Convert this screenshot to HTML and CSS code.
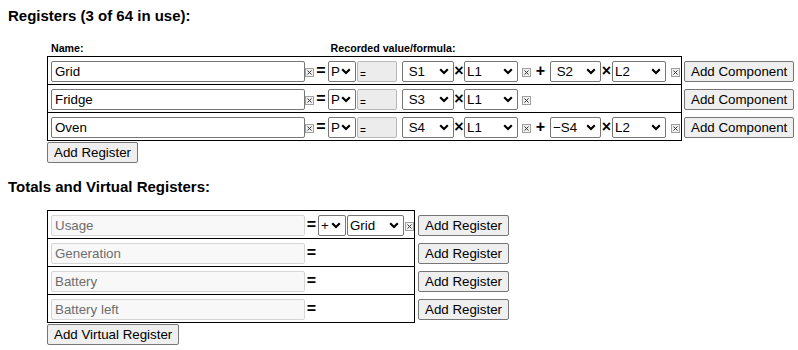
FILE: index.html
```html
<!DOCTYPE html>
<html>
<head>
<meta charset="utf-8">
<link rel="stylesheet" href="styles.css">
</head>
<body>
<div class="page">
  <div class="heading">Registers (3 of 64 in use):</div>
  <div class="labels">
    <span class="lbl-name">Name:</span>
    <span class="lbl-val">Recorded value/formula:</span>
  </div>
  <div class="tbl">
    <div class="row">
      <div class="cell cell-wide">
        <input class="name" type="text" value="Grid">
        <span class="xbox"><svg width="9" height="9" viewBox="0 0 9 9"><rect x="0.5" y="0.5" width="8" height="8" fill="#f0f0f0" stroke="#a0a0a0"/><path d="M2.5 2.5L6.5 6.5M6.5 2.5L2.5 6.5" stroke="#333" stroke-width="1"/></svg></span>
        <span class="op op-eq">=</span>
        <select class="sel-p"><option>P</option></select>
        <input class="eqbox" type="text" value="=" readonly>
        <select class="sel-s"><option>&nbsp;S1</option></select>
        <span class="op op-x">×</span>
        <select class="sel-l"><option>L1</option></select>
        <span class="xbox xbox-mid"><svg width="9" height="9" viewBox="0 0 9 9"><rect x="0.5" y="0.5" width="8" height="8" fill="#f0f0f0" stroke="#a0a0a0"/><path d="M2.5 2.5L6.5 6.5M6.5 2.5L2.5 6.5" stroke="#333" stroke-width="1"/></svg></span>
        <span class="op op-plus">+</span>
        <select class="sel-s2"><option>&nbsp;S2</option></select>
        <span class="op op-x2">×</span>
        <select class="sel-l"><option>L2</option></select>
        <span class="xbox xbox-end"><svg width="9" height="9" viewBox="0 0 9 9"><rect x="0.5" y="0.5" width="8" height="8" fill="#f0f0f0" stroke="#a0a0a0"/><path d="M2.5 2.5L6.5 6.5M6.5 2.5L2.5 6.5" stroke="#333" stroke-width="1"/></svg></span>
      </div>
      <button class="btn btn-side">Add Component</button>
    </div>
    <div class="row">
      <div class="cell cell-wide">
        <input class="name" type="text" value="Fridge">
        <span class="xbox"><svg width="9" height="9" viewBox="0 0 9 9"><rect x="0.5" y="0.5" width="8" height="8" fill="#f0f0f0" stroke="#a0a0a0"/><path d="M2.5 2.5L6.5 6.5M6.5 2.5L2.5 6.5" stroke="#333" stroke-width="1"/></svg></span>
        <span class="op op-eq">=</span>
        <select class="sel-p"><option>P</option></select>
        <input class="eqbox" type="text" value="=" readonly>
        <select class="sel-s"><option>&nbsp;S3</option></select>
        <span class="op op-x">×</span>
        <select class="sel-l"><option>L1</option></select>
        <span class="xbox xbox-mid"><svg width="9" height="9" viewBox="0 0 9 9"><rect x="0.5" y="0.5" width="8" height="8" fill="#f0f0f0" stroke="#a0a0a0"/><path d="M2.5 2.5L6.5 6.5M6.5 2.5L2.5 6.5" stroke="#333" stroke-width="1"/></svg></span>
      </div>
      <button class="btn btn-side">Add Component</button>
    </div>
    <div class="row">
      <div class="cell cell-wide">
        <input class="name" type="text" value="Oven">
        <span class="xbox"><svg width="9" height="9" viewBox="0 0 9 9"><rect x="0.5" y="0.5" width="8" height="8" fill="#f0f0f0" stroke="#a0a0a0"/><path d="M2.5 2.5L6.5 6.5M6.5 2.5L2.5 6.5" stroke="#333" stroke-width="1"/></svg></span>
        <span class="op op-eq">=</span>
        <select class="sel-p"><option>P</option></select>
        <input class="eqbox" type="text" value="=" readonly>
        <select class="sel-s"><option>&nbsp;S4</option></select>
        <span class="op op-x">×</span>
        <select class="sel-l"><option>L1</option></select>
        <span class="xbox xbox-mid"><svg width="9" height="9" viewBox="0 0 9 9"><rect x="0.5" y="0.5" width="8" height="8" fill="#f0f0f0" stroke="#a0a0a0"/><path d="M2.5 2.5L6.5 6.5M6.5 2.5L2.5 6.5" stroke="#333" stroke-width="1"/></svg></span>
        <span class="op op-plus">+</span>
        <select class="sel-s2"><option>&minus;S4</option></select>
        <span class="op op-x2">×</span>
        <select class="sel-l"><option>L2</option></select>
        <span class="xbox xbox-end"><svg width="9" height="9" viewBox="0 0 9 9"><rect x="0.5" y="0.5" width="8" height="8" fill="#f0f0f0" stroke="#a0a0a0"/><path d="M2.5 2.5L6.5 6.5M6.5 2.5L2.5 6.5" stroke="#333" stroke-width="1"/></svg></span>
      </div>
      <button class="btn btn-side">Add Component</button>
    </div>
  </div>
  <button class="btn btn-add">Add Register</button>

  <div class="heading heading-2">Totals and Virtual Registers:</div>
  <div class="tbl tbl-2">
    <div class="row">
      <div class="cell cell-narrow">
        <input class="name" type="text" value="Usage" disabled>
        <span class="op op-veq">=</span>
        <select class="sel-p"><option>+</option></select>
        <select class="sel-grid"><option>Grid</option></select>
        <span class="xbox xbox-v"><svg width="9" height="9" viewBox="0 0 9 9"><rect x="0.5" y="0.5" width="8" height="8" fill="#f0f0f0" stroke="#a0a0a0"/><path d="M2.5 2.5L6.5 6.5M6.5 2.5L2.5 6.5" stroke="#333" stroke-width="1"/></svg></span>
      </div>
      <button class="btn btn-side2">Add Register</button>
    </div>
    <div class="row">
      <div class="cell cell-narrow">
        <input class="name" type="text" value="Generation" disabled>
        <span class="op op-veq">=</span>
      </div>
      <button class="btn btn-side2">Add Register</button>
    </div>
    <div class="row">
      <div class="cell cell-narrow">
        <input class="name" type="text" value="Battery" disabled>
        <span class="op op-veq">=</span>
      </div>
      <button class="btn btn-side2">Add Register</button>
    </div>
    <div class="row">
      <div class="cell cell-narrow">
        <input class="name" type="text" value="Battery left" disabled>
        <span class="op op-veq">=</span>
      </div>
      <button class="btn btn-side2">Add Register</button>
    </div>
  </div>
  <button class="btn btn-add">Add Virtual Register</button>
</div>
</body>
</html>
```

FILE: styles.css
```css
html, body {
  margin: 0;
  padding: 0;
  background: #ffffff;
}

body {
  font-family: "Liberation Sans", Arial, sans-serif;
  color: #000000;
}

.page {
  padding: 7px 0 0 8px;
}

.heading {
  font-weight: bold;
  font-size: 15px;
  line-height: 17px;
  height: 17px;
}

.heading-2 {
  margin-top: 15px;
}

.labels {
  display: flex;
  margin: 18px 0 0 43px;
  font-size: 10.67px;
  font-weight: bold;
  line-height: 12px;
  height: 12px;
}

.lbl-val {
  margin-left: 247px;
}

.tbl {
  margin: 2px 0 0 39px;
  display: flex;
  flex-direction: column;
}

.tbl-2 {
  margin-top: 15px;
}

.row {
  display: flex;
  align-items: flex-start;
}

.row + .row {
  margin-top: -1px;
}

.cell {
  box-sizing: border-box;
  height: 29px;
  border: 1px solid #000;
  padding: 4px 0 0 3px;
  display: flex;
  align-items: flex-start;
}

.cell > * {
  flex: none;
}

.cell-wide {
  width: 635px;
}

.cell-narrow {
  width: 368px;
}

input, select, button {
  font-family: "Liberation Sans", Arial, sans-serif;
  font-size: 13.33px;
  box-sizing: border-box;
  height: 21px;
  margin: 0;
}

input.name {
  width: 254px;
  padding: 1px 3px;
  border: 1px solid #767676;
  border-radius: 2px;
  color: #000;
  background: #fff;
}

input.name:disabled {
  background: #f8f8f8;
  color: #6d6d6d;
  border-color: #d6d6d6;
}

.xbox {
  display: block;
  width: 9px;
  height: 9px;
  margin-top: 7px;
  line-height: 0;
}

.xbox svg {
  display: block;
}

.xbox-mid {
  margin-left: 4px;
}

.xbox-end {
  margin-left: 5px;
}

.xbox-v {
  margin-left: 1px;
}

.op {
  display: block;
  font-weight: bold;
  font-size: 16px;
  line-height: 20px;
  height: 21px;
  text-align: center;
}

.op-eq {
  width: 14px;
}

.op-veq {
  width: 13px;
}

.op-x {
  width: 10px;
}

.op-x2 {
  width: 11px;
}

.op-plus {
  width: 19px;
}

select {
  -webkit-appearance: none;
  appearance: none;
  border: 1px solid #767676;
  border-radius: 2px;
  background-color: #fff;
  background-image: url("data:image/svg+xml;utf8,<svg xmlns='http://www.w3.org/2000/svg' width='10' height='7' viewBox='0 0 10 7'><path d='M1.2 1.3L5 5l3.8-3.7' fill='none' stroke='%23000' stroke-width='2.2'/></svg>");
  background-repeat: no-repeat;
  background-position: right 4px center;
  color: #000;
  padding: 0 14px 0 2px;
}

.sel-p {
  width: 28px;
}

.sel-s {
  width: 52px;
  margin-left: 5px;
}

.sel-s2 {
  width: 51px;
}

.sel-l {
  width: 54px;
}

.sel-grid {
  width: 57px;
  margin-left: 1px;
}

.eqbox {
  width: 40px;
  margin-left: 1px;
  background: #ececec;
  border: 1px solid #b8b8b8;
  border-radius: 2px;
  font-size: 10px;
  padding: 6px 2px 0;
  color: #000;
}

.btn {
  background: #efefef;
  border: 1px solid #767676;
  border-radius: 2px;
  padding: 1px 6px;
  color: #000;
}

.btn-side {
  margin: 5px 0 0 2px;
}

.btn-side2 {
  margin: 5px 0 0 3px;
}

.btn-add {
  display: block;
  margin: 1px 0 0 39px;
}
```
